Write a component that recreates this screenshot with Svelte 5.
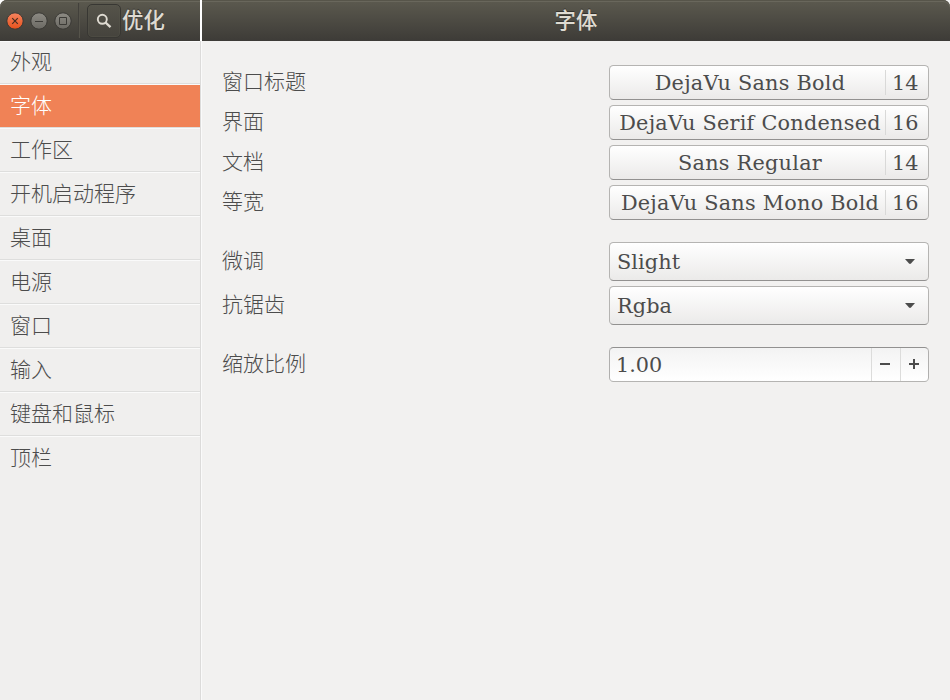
<script>
  const sections = ['外观', '字体', '工作区', '开机启动程序', '桌面', '电源', '窗口', '输入', '键盘和鼠标', '顶栏'];
  const active = '字体';
  const fonts = [
    { label: '窗口标题', name: 'DejaVu Sans Bold', size: 14 },
    { label: '界面', name: 'DejaVu Serif Condensed', size: 16 },
    { label: '文档', name: 'Sans Regular', size: 14 },
    { label: '等宽', name: 'DejaVu Sans Mono Bold', size: 16 },
  ];
  const choices = [
    { label: '微调', value: 'Slight' },
    { label: '抗锯齿', value: 'Rgba' },
  ];
</script>

<div class="window">
  <aside>
    <header class="bar left">
      <div class="controls">
        <svg width="66" height="20" viewBox="0 0 66 20">
          <defs>
            <linearGradient id="close" x1="0" y1="0" x2="0" y2="1">
              <stop offset="0" stop-color="#f58460" /><stop offset="1" stop-color="#e6511b" />
            </linearGradient>
            <linearGradient id="plain" x1="0" y1="0" x2="0" y2="1">
              <stop offset="0" stop-color="#8d8b84" /><stop offset="1" stop-color="#6b6963" />
            </linearGradient>
          </defs>
          <circle cx="9" cy="10" r="8.2" fill="url(#close)" stroke="#393834" />
          <circle cx="33" cy="10" r="8.2" fill="url(#plain)" stroke="#393834" />
          <circle cx="57" cy="10" r="8.2" fill="url(#plain)" stroke="#393834" />
          <path d="M6.2 7.2l5.6 5.6M11.8 7.2l-5.6 5.6" stroke="#452c20" stroke-width="1.2" />
          <path d="M29 10.5h8M53.5 6.5h7v7h-7z" stroke="#3c3b37" fill="none" />
        </svg>
      </div>
      <span class="divider"></span>
      <button class="search" aria-label="搜索">
        <svg width="16" height="16" viewBox="0 0 16 16" fill="none" stroke="#dfdbd2">
          <circle cx="6.3" cy="6.3" r="4.5" stroke-width="1.9" />
          <path d="M9.5 9.5l5 4.7" stroke-width="2.4" />
        </svg>
      </button>
      <h1>优化</h1>
    </header>
    <nav>
      {#each sections as section}
        <div class="item" class:active={section === active}>{section}</div>
      {/each}
    </nav>
  </aside>

  <main>
    <header class="bar right"><h1>{active}</h1></header>
    <section class="settings">
      <div class="group">
        {#each fonts as font}
          <div class="row">
            <span class="label">{font.label}</span>
            <button class="control font">
              <span class="name">{font.name}</span>
              <span class="size">{font.size}</span>
            </button>
          </div>
        {/each}
      </div>
      <div class="group">
        {#each choices as choice}
          <div class="row">
            <span class="label">{choice.label}</span>
            <button class="control combo">
              <span>{choice.value}</span>
              <svg width="10" height="5" viewBox="0 0 10 5"><path d="M0 0h10L6 4.6Q5 5.3 4 4.6z" fill="#4c4c4c" /></svg>
            </button>
          </div>
        {/each}
      </div>
      <div class="group">
        <div class="row">
          <span class="label">缩放比例</span>
          <div class="control spin">
            <span class="value">1.00</span>
            <span class="step minus"><svg width="10" height="10"><path d="M0 4h10v2H0z" fill="#4c4c4c" /></svg></span>
            <span class="step"><svg width="10" height="10"><path d="M0 4h4V0h2v4h4v2H6v4H4V6H0z" fill="#4c4c4c" /></svg></span>
          </div>
        </div>
      </div>
    </section>
  </main>
</div>

<style>
  :global(body) { margin: 0; background: #fff; }
  svg { display: block; }
  .window {
    display: flex;
    width: 950px;
    height: 700px;
    overflow: hidden;
    color: #4c4c4c;
    font: 300 21px 'Noto Sans CJK SC', sans-serif;
  }
  aside {
    box-sizing: border-box;
    width: 202px;
    display: flex;
    flex-direction: column;
  }
  main { flex: 1; background: #f2f1f0; }
  .bar {
    box-sizing: border-box;
    height: 41px;
    display: flex;
    align-items: center;
    background: linear-gradient(#5c5a4f, #3d3b37);
    box-shadow: inset 0 1px #57554a, inset 0 2px #69675c;
  }
  .left { width: 200px; padding-left: 6px; border-top-left-radius: 7px; }
  .right { justify-content: center; border-top-right-radius: 7px; }
  h1 {
    margin: 0;
    color: #dfdbd2;
    font-size: 21.4px;
    line-height: 38px;
    font-weight: 500;
    text-shadow: 0 -1px #33322e;
    padding-bottom: 4px;
  }
  .controls { width: 66px; height: 20px; }
  .divider {
    width: 1px;
    height: 35px;
    margin-left: 6px;
    background: #42403b;
    border-right: 1px solid #56544b;
  }
  .search {
    box-sizing: border-box;
    width: 34px;
    height: 34px;
    margin: 0 1px 0 7px;
    padding: 0;
    display: flex;
    align-items: center;
    justify-content: center;
    border: 1px solid #383733;
    border-radius: 5px;
    background: linear-gradient(#55534a, #45433d);
    box-shadow: inset 0 0 0 1px #5b594f55;
  }
  nav { flex: 1; background: #f0efee; border-right: 1px solid #dcdbda; box-shadow: 1px 0 #fafafa; width: 200px; }
  .item {
    box-sizing: border-box;
    height: 44px;
    padding: 1px 0 0 10px;
    line-height: 39px;
    border-bottom: 1px solid #dededd;
    box-shadow: inset 0 1px #fafafa;
  }
  .item:first-child { height: 43px; padding-top: 0; }
  .item:last-child { border-bottom: 0; }
  .item.active { color: #fff; background: #f08256; }
  .settings {
    padding: 24px 21px 0 20px;
    display: flex;
    flex-direction: column;
    gap: 22px;
  }
  .group { display: flex; flex-direction: column; gap: 5px; }
  .row { display: flex; justify-content: space-between; align-items: center; }
  .label { line-height: 29px; padding-bottom: 5px; }
  .control {
    box-sizing: border-box;
    width: 320px;
    height: 35px;
    display: flex;
    align-items: center;
    padding: 0;
    color: #4c4c4c;
    font: 20.8px/30px 'DejaVu Serif', serif;
    border: 1px solid #b5b4b2;
    border-bottom-color: #929190;
    border-radius: 4.5px;
    background: linear-gradient(#fff, #ebeae9);
  }
  .name { flex: 1; text-align: center; white-space: nowrap; padding-left: 5px; letter-spacing: .25px; }
  .size {
    box-sizing: border-box;
    width: 43px;
    height: 25px;
    line-height: 27px;
    padding-left: 6px;
    text-align: left;
    border-left: 1px solid #d9d9d8;
  }
  .combo { height: 39px; justify-content: space-between; padding: 0 13px 0 7px; letter-spacing: .1px; }
  .spin {
    border-color: #929190 #b0afae #b5b4b2;
    background: linear-gradient(#f3f3f3, #fff);
  }
  .value { flex: 1; padding-left: 6px; }
  .step {
    box-sizing: border-box;
    width: 28px;
    height: 33px;
    display: flex;
    align-items: center;
    justify-content: center;
    padding: 0 1px 1px 0;
    border-left: 1px solid #dcdcdb;
  }
  .minus { width: 29px; padding-right: 2px; }
</style>
